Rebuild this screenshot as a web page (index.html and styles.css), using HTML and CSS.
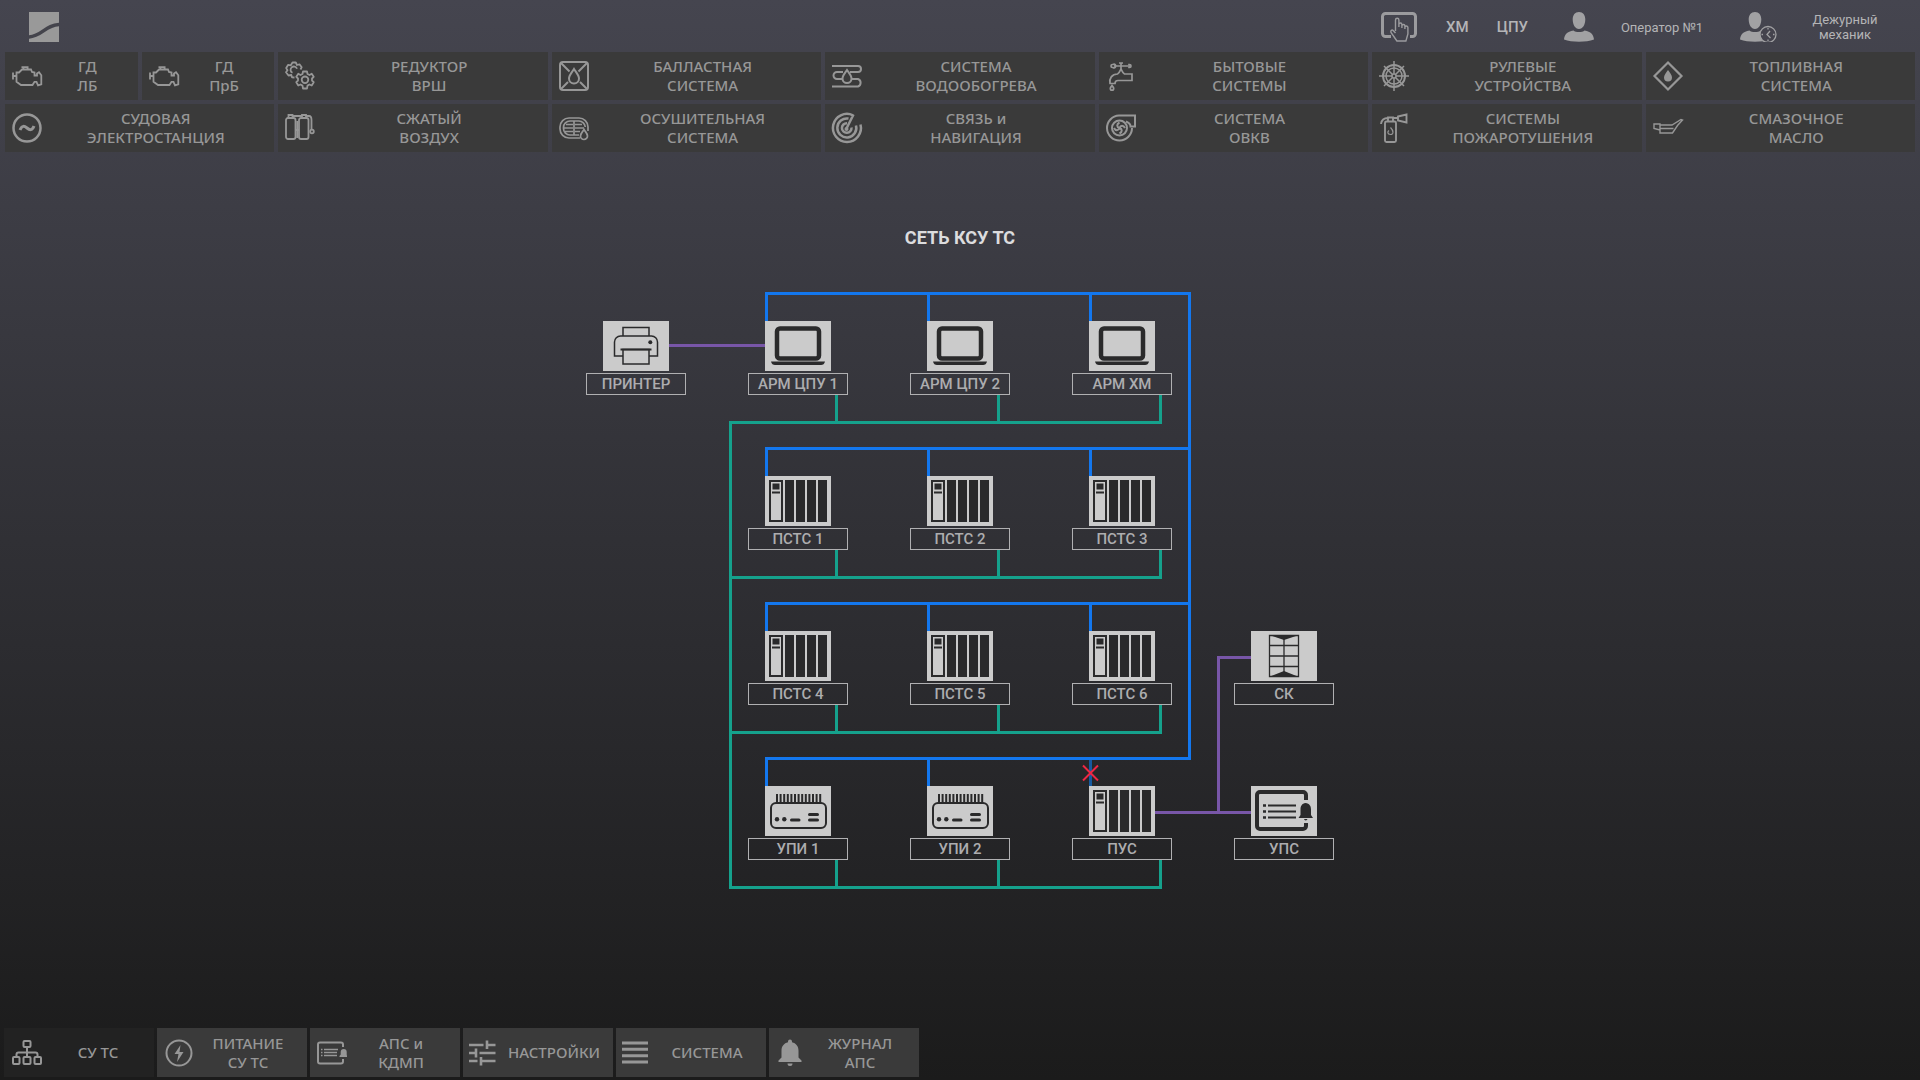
FILE: index.html
```html
<!DOCTYPE html>
<html lang="ru">
<head>
<meta charset="utf-8">
<title>СЕТЬ КСУ ТС</title>
<link rel="stylesheet" href="styles.css">
</head>
<body>
<svg class="sprite" aria-hidden="true">
  <symbol id="engine" viewBox="0 0 30 30"><g fill="none" stroke="currentColor" stroke-width="1.8"><path d="M4.500 11.500H7L10 8.500h9l1 2.500 2.500.5v3h2.500v-2l2-1.200 2.300 3v9l-3.300 1-1.500-3.500h-2L20.500 24H9l-4.500-3.200z"/><path d="M1 11.500v7M1.500 15h3M11 8l1-2M16 8l-1-2M9.500 6.200h7"/></g></symbol>
  <symbol id="gears" viewBox="0 0 30 30"><g fill="none" stroke="currentColor" stroke-width="1.800" stroke-linejoin="round"><path d="M18 10.500h4l.5 2.500 2 1 2.200-1.200 2 3-1.700 1.700v2l1.700 1.700-2 3.300-2.300-1-1.900 1.100-.5 2.900h-4l-.5-2.900-2-1.100-2.200 1-2-3.300 1.700-1.700v-2l-1.700-1.700 2-3 2.200 1.200 2-1z"/><circle cx="20" cy="18.800" r="3.300"/><path d="M9.500 16.500l-2.500-.200L6.300 14l-2.800.5L1 11.300l1.500-2L1.200 7l2-3.200 2.600.5L7.500 1.500h3.300L12 4l2.500-.7 2.200 2.900-1.200 2.300"/><path d="M7.500 11.800A3.300 3.300 0 1 1 12 7.800"/></g></symbol>
  <symbol id="ballast" viewBox="0 0 30 30"><g fill="none" stroke="currentColor" stroke-width="2"><rect x="1" y="1" width="28" height="28" rx="3"/><path d="M2 2l8.500 8.500M28 2l-8.500 8.500M2 28l7-7M28 28l-7-7"/><path d="M15 8c2.500 4 5 6.500 5 9.500a5 5 0 0 1-10 0C10 14.500 12.500 12 15 8z"/></g></symbol>
  <symbol id="heating" viewBox="0 0 30 30"><g fill="none" stroke="currentColor" stroke-width="2"><path d="M0 5h26a3 3 0 0 1 0 6h-8M11 11H5a3.500 3.500 0 0 0 0 7h5M20 18h6a4 4 0 0 1 0 7.500H0"/><path d="M15 9c2.500 3.500 4.500 5.500 4.500 8.500a4.500 4.500 0 0 1-9 0C10.500 14.500 12.500 12.500 15 9z"/></g></symbol>
  <symbol id="tap" viewBox="0 0 30 30"><g fill="none" stroke="currentColor" stroke-width="1.700"><path d="M7 3.500a1.800 1.800 0 1 1 0 3h-.500a1.500 1.500 0 0 1 0-3zM23 3.500h.5a1.500 1.500 0 0 1 0 3H23zM8 5h14M13 2h4M15 2v8M11.500 13c2-1 2.500-3 3.500-5 1 2 1.500 4 3.500 5H26v6.500H12c-2 0-3 .5-3 3H4c-1-5 2-9.500 7.500-9.500z"/><path d="M6 24.500c1 1.500 1.700 2 1.700 3a1.700 1.700 0 0 1-3.400 0c0-1 .7-1.500 1.700-3z"/></g></symbol>
  <symbol id="wheel" viewBox="0 0 30 30"><g fill="none" stroke="currentColor" stroke-width="1.500"><circle cx="15" cy="15" r="11" stroke-width="2"/><circle cx="15" cy="15" r="8"/><circle cx="15" cy="15" r="2"/><path d="M15 0v13M15 17v13M0 15h13M17 15h13M5 5l8.500 8.500M16.500 16.500L25 25M25 5l-8.500 8.500M13.500 16.500L5 25"/></g></symbol>
  <symbol id="fuel" viewBox="0 0 30 30"><path d="M15 1.500L28.500 15 15 28.500 1.500 15z" fill="none" stroke="currentColor" stroke-width="2.200"/><path d="M15 9c2 3 4 5 4 7.500a4 4 0 0 1-8 0C11 14 13 12 15 9z" fill="currentColor"/></symbol>
  <symbol id="power" viewBox="0 0 30 30"><g fill="none" stroke="currentColor" stroke-width="2.500"><circle cx="15" cy="15" r="13.500"/><path stroke-width="3" d="M8 17c2-5 4.500-4 7-2s5 3 7-2"/></g></symbol>
  <symbol id="air" viewBox="0 0 30 30"><g fill="none" stroke="currentColor" stroke-width="1.800"><rect x="1" y="5" width="9.500" height="21" rx="2"/><rect x="14" y="5" width="9.500" height="21" rx="2"/><path d="M3.500 5V2h4v3M17 5V2h4v3M7.500 3H17M21 3h3c2 0 2.500 2 2.500 4v10M10.500 17H14M12.200 8v17"/><circle cx="27" cy="18.500" r="1.800"/></g></symbol>
  <symbol id="bilge" viewBox="0 0 30 30"><g fill="none" stroke="currentColor" stroke-width="1.700"><path d="M21 25H10A9 9 0 0 1 1 16v-2a9 9 0 0 1 9-9h10a9 9 0 0 1 9 9v4"/><path d="M20 22H11a6.500 6.500 0 0 1-6.500-6.500v-1A6.500 6.500 0 0 1 11 8h9a6.500 6.500 0 0 1 6.300 6M7 11.500h7M16 11.500h7M5 15h9M16 15h9M6 18.500h8M16 18.500h5M15 8v14"/><path d="M25 16.500c1.500 2.500 3.500 4 3.500 6.500a3.500 3.500 0 0 1-7 0c0-2.500 2-4 3.500-6.500z"/></g></symbol>
  <symbol id="radar" viewBox="0 0 30 30"><g fill="none" stroke="currentColor" stroke-width="2.500"><path d="M28.500 11.500A14 14 0 1 1 21 2.300M24 12.500A9.500 9.500 0 1 1 16.500 5.600M19.500 14.500a4.800 4.800 0 1 1-4.500-4.300M14.500 15.500L21.500 1.500"/></g><circle cx="14.500" cy="16" r="2" fill="currentColor"/></symbol>
  <symbol id="fan" viewBox="0 0 30 30"><g fill="none" stroke="currentColor" stroke-width="2"><path d="M26 15a12.500 12.500 0 1 1-13-12.500H29v11h-4.500c0-2-2-4-4.500-5"/><circle cx="13.500" cy="15" r="7.500"/></g><g fill="none" stroke="currentColor" stroke-width="2"><path d="M13.500 15c-3-1-3-4 0-5.500M13.500 15c1-3 4-3 5.500 0M13.500 15c3 1 3 4 0 5.500M13.500 15c-1 3-4 3-5.500 0"/></g></symbol>
  <symbol id="fire" viewBox="0 0 30 30"><g fill="none" stroke="currentColor" stroke-width="1.900"><rect x="6" y="8.500" width="11" height="20.500" rx="1.500"/><path d="M9 8V4.500h5V8M2 11c.5-4 3-6 7-6M14 5h5M19 3.500l8.500-2v8L19 7.500z"/><path stroke-width="1.200" d="M11.500 14.500c3 3 3.500 7 0 7s-3-3-1.500-4"/></g></symbol>
  <symbol id="oil" viewBox="0 0 30 30"><g fill="none" stroke="currentColor" stroke-width="1.400"><path d="M7 12h12l9-5.500 1.500.5-5 5.500-5 7.500H7zM7 12V11H1v4.500l6 1.500M7 15.500h13.500"/></g></symbol>
  <symbol id="touch" viewBox="0 0 36 30"><path d="M10 24.500H4.500a3 3 0 0 1-3-3V4.500a3 3 0 0 1 3-3h27a3 3 0 0 1 3 3v17a3 3 0 0 1-3 3H29" fill="none" stroke="currentColor" stroke-width="3"/><path d="M14.500 19V8a1.700 1.700 0 0 1 3.400 0v7M17.900 15v-2.500a1.500 1.500 0 0 1 3 0V16v-2a1.500 1.500 0 0 1 3 0v3-1.500a1.500 1.500 0 0 1 3 0V22l-2 7h-9L10 20.500c-.8-2 1-3 2.200-2l2.300 2.500" fill="none" stroke="currentColor" stroke-width="1.400"/></symbol>
  <symbol id="user" viewBox="0 0 30 30"><path d="M15 0c4 0 6.300 3 6.300 7.500 0 5-2.500 9.500-6.300 9.500S8.700 12.500 8.700 7.500C8.700 3 11 0 15 0zM0 27.500c.5-5 3-8 9.500-9 2 2 9 2 11 0 6.500 1 9 4 9.500 9-8 3-22 3-30 0z" fill="currentColor"/></symbol>
  <symbol id="tree" viewBox="0 0 30 30"><g fill="none" stroke="currentColor" stroke-width="2"><rect x="11.500" y="3" width="7" height="6" rx="1"/><rect x="1" y="19" width="6.500" height="7" rx="1"/><rect x="11.500" y="19" width="7" height="7" rx="1"/><rect x="22.500" y="19" width="6.500" height="7" rx="1"/><path d="M15 9v10M4.500 19v-2.500a2 2 0 0 1 2-2h17a2 2 0 0 1 2 2V19"/></g></symbol>
  <symbol id="bolt" viewBox="0 0 30 30"><circle cx="15" cy="15" r="12.500" fill="none" stroke="currentColor" stroke-width="2"/><path d="M16.500 7L10.500 16h4l-1.500 8 6.500-10h-4z" fill="currentColor"/></symbol>
  <symbol id="alarm-list" viewBox="0 0 30 30"><g fill="none" stroke="currentColor"><path stroke-width="2" d="M26 9V6.500a2 2 0 0 0-2-2H3a2 2 0 0 0-2 2v17a2 2 0 0 0 2 2h21a2 2 0 0 0 2-2V21"/><path stroke-width="1.300" d="M4 11.500h1.500M4 14.500h1.500M4 17.500h1.500M7 11.500h14M7 14.500h13M7 17.500h13"/></g><path d="M22.500 18l1.200-1.500V14a3 3 0 0 1 6 0v2.500L30 18v1h-7.500z" fill="currentColor"/></symbol>
  <symbol id="tune" viewBox="0 0 30 30"><path d="M-1 7h14.500M17.500 7h8M17 2.500v8.500M-1 15h7M9.500 15h16M6 10.500v9M-1 23h8.500M11.500 23h14M11 19v8.500" fill="none" stroke="currentColor" stroke-width="2.600"/></symbol>
  <symbol id="lines" viewBox="0 0 30 30"><path d="M-1 5h26M-1 11.300h26M-1 17.700h26M-1 24h26" fill="none" stroke="currentColor" stroke-width="3"/></symbol>
  <symbol id="bell" viewBox="0 0 30 30"><path d="M14 1.500a2 2 0 0 1 2 2v.800c4 1 6.500 4 6.500 8.200v7l3 3V24h-23v-1.500l3-3v-7c0-4.200 2.500-7.200 6.500-8.200v-.8a2 2 0 0 1 2-2zM11.500 25.500h5a2.500 2.500 0 0 1-5 0z" fill="currentColor"/></symbol>

  <symbol id="n-printer" viewBox="0 0 66 50"><g fill="none" stroke="currentColor" stroke-width="1.500"><path d="M20 15V6.500h26V15M20 35h-8.500V21a6 6 0 0 1 6-6h31a6 6 0 0 1 6 6v14H46"/><rect x="20" y="28.500" width="26" height="14.500"/><path d="M17.500 28.500h31" stroke-width="2"/></g><circle cx="47.300" cy="21.300" r="2" fill="currentColor"/></symbol>
  <symbol id="n-laptop" viewBox="0 0 66 50"><rect x="12" y="7.500" width="42" height="30" rx="3" fill="none" stroke="currentColor" stroke-width="4.500"/><path d="M6 40.500h54c-.5 2.500-2 3.500-4 3.500H10c-2 0-3.500-1-4-3.500z" fill="currentColor"/></symbol>
  <symbol id="n-plc" viewBox="0 0 66 50"><path fill="currentColor" fill-rule="evenodd" d="M4 4h14v42H4zM6 6v38h10V6zM20 4h9v42h-9zM31 4h9v42h-9zM42 4h9v42h-9zM53 4h9v42h-9zM7.500 7.500h7v6h-7zM7 15.500h8v2H7z"/></symbol>
  <symbol id="n-gateway" viewBox="0 0 66 50"><rect x="6" y="17" width="55" height="25" rx="5" fill="none" stroke="currentColor" stroke-width="2"/><path d="M11 12.500h46" stroke="currentColor" stroke-width="9" stroke-dasharray="2 1.600" fill="none"/><circle cx="12" cy="33.300" r="2.200" fill="currentColor"/><circle cx="19.300" cy="33.300" r="2.200" fill="currentColor"/><path d="M26.500 34h7.500M44.500 28.500h8M44.500 34h8" stroke="currentColor" stroke-width="3" stroke-linecap="round"/></symbol>
  <symbol id="n-alarm" viewBox="0 0 66 50"><g fill="none" stroke="currentColor"><path stroke-width="4" d="M55 14V9a3 3 0 0 0-3-3H9a3 3 0 0 0-3 3v31a3 3 0 0 0 3 3h43a3 3 0 0 0 3-3v-3"/><path stroke-width="2" d="M17 19.500h28M17 25.500h28M17 31.500h28"/><path stroke-width="2.500" d="M12 19.500h3M12 25.500h3M12 31.500h3"/></g><path d="M54.500 17c4 .5 5.500 3 5.500 6.500V29l2 3H47.500l2-3v-5.500c0-3.500 1.500-6 5-6.500zM53 33h3.500a1.800 1.800 0 0 1-3.500 0z" fill="currentColor"/></symbol>
  <symbol id="n-cabinet" viewBox="0 0 66 50"><path d="M18.500 4.500h29v41h-29zM33 8v34M18.500 14.500h29M18.500 25h29M18.500 35.500h29" fill="none" stroke="currentColor" stroke-width="1.300"/><path d="M18 4h30l-15 5zM18 46h30l-15-6z" fill="currentColor"/></symbol>
</svg>

<header class="topbar">
  <svg class="logo" viewBox="0 0 30 30" aria-hidden="true"><path d="M0 0h30v30H0z" fill="#999"/><path d="M-1 25C13 25 16 12.500 31 12.500" fill="none" stroke="#44444c" stroke-width="3.500"/></svg>
  <svg class="touch"><use href="#touch"/></svg>
  <div class="posts"><span>ХМ</span><span>ЦПУ</span></div>
  <div class="person"><svg class="icon"><use href="#user"/></svg><span class="person-name">Оператор №1</span></div>
  <div class="person"><svg class="icon-wide" viewBox="0 0 37 30"><use href="#user" width="30" height="30"/><circle cx="28" cy="22.500" r="8" fill="#44434d" stroke="currentColor" stroke-width="1.300"/><path d="M28 16v1.500M28 27.500V29M21.500 22.500H23M33 22.500h1.500M30 19l-3 3.500 3.500 3.500" fill="none" stroke="currentColor" stroke-width="1.300"/></svg><span class="person-name">Дежурный механик</span></div>
</header>

<nav class="systems" aria-label="Системы">
  <button class="tile half"><svg class="icon"><use href="#engine"/></svg><span>ГД<br>ЛБ</span></button>
  <button class="tile half"><svg class="icon"><use href="#engine"/></svg><span>ГД<br>ПрБ</span></button>
  <button class="tile"><svg class="icon"><use href="#gears"/></svg><span>РЕДУКТОР<br>ВРШ</span></button>
  <button class="tile"><svg class="icon"><use href="#ballast"/></svg><span>БАЛЛАСТНАЯ<br>СИСТЕМА</span></button>
  <button class="tile"><svg class="icon"><use href="#heating"/></svg><span>СИСТЕМА<br>ВОДООБОГРЕВА</span></button>
  <button class="tile"><svg class="icon"><use href="#tap"/></svg><span>БЫТОВЫЕ<br>СИСТЕМЫ</span></button>
  <button class="tile"><svg class="icon"><use href="#wheel"/></svg><span>РУЛЕВЫЕ<br>УСТРОЙСТВА</span></button>
  <button class="tile"><svg class="icon"><use href="#fuel"/></svg><span>ТОПЛИВНАЯ<br>СИСТЕМА</span></button>
  <button class="tile"><svg class="icon"><use href="#power"/></svg><span>СУДОВАЯ<br>ЭЛЕКТРОСТАНЦИЯ</span></button>
  <button class="tile"><svg class="icon"><use href="#air"/></svg><span>СЖАТЫЙ<br>ВОЗДУХ</span></button>
  <button class="tile"><svg class="icon"><use href="#bilge"/></svg><span>ОСУШИТЕЛЬНАЯ<br>СИСТЕМА</span></button>
  <button class="tile"><svg class="icon"><use href="#radar"/></svg><span>СВЯЗЬ и<br>НАВИГАЦИЯ</span></button>
  <button class="tile"><svg class="icon"><use href="#fan"/></svg><span>СИСТЕМА<br>ОВКВ</span></button>
  <button class="tile"><svg class="icon"><use href="#fire"/></svg><span>СИСТЕМЫ<br>ПОЖАРОТУШЕНИЯ</span></button>
  <button class="tile"><svg class="icon"><use href="#oil"/></svg><span>СМАЗОЧНОЕ<br>МАСЛО</span></button>
</nav>

<main class="content">
  <h1 class="title">СЕТЬ КСУ ТС</h1>
  <div class="network">
    <svg class="wires" viewBox="0 0 748 597" aria-hidden="true">
      <g class="wire-green">
        <path d="M573 130.500H144.500v465h430V568M144.500 285.500h430V258M144.500 440.500h430V413M574.500 103v29"/>
        <path d="M250.500 103v27M412.500 103v27M250.500 258v27M412.500 258v27M250.500 413v27M412.500 413v27M250.500 568v27M412.500 568v27"/>
      </g>
      <g class="wire-blue">
        <path d="M180.500 30V1.500h423v465h-423V496M180.500 185v-28.500h423M180.500 340v-28.500h423"/>
        <path d="M342.500 1v29M504.500 1v29M342.500 156v29M504.500 156v29M342.500 311v29M504.500 311v29M342.500 466v29"/>
      </g>
      <g class="wire-violet"><path d="M83 53.500h96M665 365.500h-32.500v155M569 520.500h96"/></g>
      <path class="wire-down" d="M504.500 468v26"/>
      <path class="fault" d="M497 473.500l15 15M512 473.500l-15 15"/>
    </svg>
    <figure class="node c1 r1"><svg><use href="#n-printer"/></svg><figcaption>ПРИНТЕР</figcaption></figure>
    <figure class="node c2 r1"><svg><use href="#n-laptop"/></svg><figcaption>АРМ ЦПУ 1</figcaption></figure>
    <figure class="node c3 r1"><svg><use href="#n-laptop"/></svg><figcaption>АРМ ЦПУ 2</figcaption></figure>
    <figure class="node c4 r1"><svg><use href="#n-laptop"/></svg><figcaption>АРМ ХМ</figcaption></figure>
    <figure class="node c2 r2"><svg><use href="#n-plc"/></svg><figcaption>ПСТС 1</figcaption></figure>
    <figure class="node c3 r2"><svg><use href="#n-plc"/></svg><figcaption>ПСТС 2</figcaption></figure>
    <figure class="node c4 r2"><svg><use href="#n-plc"/></svg><figcaption>ПСТС 3</figcaption></figure>
    <figure class="node c2 r3"><svg><use href="#n-plc"/></svg><figcaption>ПСТС 4</figcaption></figure>
    <figure class="node c3 r3"><svg><use href="#n-plc"/></svg><figcaption>ПСТС 5</figcaption></figure>
    <figure class="node c4 r3"><svg><use href="#n-plc"/></svg><figcaption>ПСТС 6</figcaption></figure>
    <figure class="node c5 r3"><svg><use href="#n-cabinet"/></svg><figcaption>СК</figcaption></figure>
    <figure class="node c2 r4"><svg><use href="#n-gateway"/></svg><figcaption>УПИ 1</figcaption></figure>
    <figure class="node c3 r4"><svg><use href="#n-gateway"/></svg><figcaption>УПИ 2</figcaption></figure>
    <figure class="node c4 r4"><svg><use href="#n-plc"/></svg><figcaption>ПУС</figcaption></figure>
    <figure class="node c5 r4"><svg><use href="#n-alarm"/></svg><figcaption>УПС</figcaption></figure>
  </div>
</main>

<nav class="tabs" aria-label="Разделы">
  <button class="tile tab current"><svg class="icon"><use href="#tree"/></svg><span>СУ ТС</span></button>
  <button class="tile tab"><svg class="icon"><use href="#bolt"/></svg><span>ПИТАНИЕ<br>СУ ТС</span></button>
  <button class="tile tab"><svg class="icon"><use href="#alarm-list"/></svg><span>АПС и<br>КДМП</span></button>
  <button class="tile tab"><svg class="icon"><use href="#tune"/></svg><span>НАСТРОЙКИ</span></button>
  <button class="tile tab"><svg class="icon"><use href="#lines"/></svg><span>СИСТЕМА</span></button>
  <button class="tile tab"><svg class="icon"><use href="#bell"/></svg><span>ЖУРНАЛ<br>АПС</span></button>
</nav>
</body>
</html>
```
FILE: styles.css
```css
* { box-sizing: border-box; }

body {
  margin: 0;
  min-height: 100vh;
  display: flex;
  flex-direction: column;
  background: linear-gradient(#45454f, #1b1b1b);
  color: #b4b4b6;
  font-family: Roboto, "Noto Sans", sans-serif;
  font-size: 15px;
}

.sprite { display: none; }

.icon {
  flex: none;
  width: 30px;
  height: 30px;
  overflow: visible;
}
.icon use, symbol { overflow: visible; }

/* Top bar */
.topbar {
  display: flex;
  align-items: center;
  height: 52px;
  padding: 2px 19px 0 29px;
}
.logo { width: 30px; height: 30px; margin-right: auto; }
.touch { width: 36px; height: 30px; color: #9b9b9e; }
.posts {
  display: flex;
  gap: 28px;
  margin: 0 36px 0 29px;
  font-weight: 500;
}
.person {
  display: flex;
  align-items: center;
  gap: 12px;
  color: #a1a1a3;
}
.person + .person { margin-left: 22px; }
.icon-wide { width: 37px; height: 30px; }
.person-name {
  width: 112px;
  padding: 0 12px;
  color: #b4b4b6;
  font-size: 13px;
  line-height: 15px;
  text-align: center;
}

/* System buttons */
.systems {
  display: grid;
  grid-template-columns: repeat(14, 1fr);
  gap: 4px;
  padding: 0 5px;
}
.tile {
  grid-column: span 2;
  display: flex;
  align-items: center;
  height: 48px;
  padding: 0 5px 0 7px;
  border: 0;
  background: #3a3a3a;
  color: #979797;
  font: 500 15px/19px "Noto Sans", sans-serif;
  text-align: center;
  cursor: pointer;
}
.tile span { flex: 1; }
.half { grid-column: span 1; }

/* Network diagram */
.content {
  flex: 1;
  padding-top: 75px;
}
.title {
  margin: 0 0 44px;
  color: #dcdcde;
  font-size: 18px;
  font-weight: 700;
  line-height: 21px;
  text-align: center;
}
.network {
  position: relative;
  display: grid;
  grid-template-columns: repeat(5, 100px);
  gap: 81px 62px;
  justify-content: center;
  width: 748px;
  margin: 0 auto;
  padding: 29px 0;
}
.wires {
  position: absolute;
  inset: 0;
  width: 748px;
  height: 597px;
  fill: none;
  stroke-width: 3;
}
.wire-green { stroke: #15a18c; }
.wire-blue { stroke: #1377ee; }
.wire-violet { stroke: #7856a8; }
.wire-down { stroke: #17599f; }
.fault { stroke: #f02743; stroke-width: 2; }

.node {
  position: relative;
  display: flex;
  flex-direction: column;
  align-items: center;
  gap: 2px;
  margin: 0;
}
.node svg {
  width: 66px;
  height: 50px;
  background: #cbcbcb;
  color: #2a2a2b;
}
.node figcaption {
  width: 100%;
  height: 22px;
  border: 1px solid #b0b0b2;
  color: #adadaf;
  line-height: 20px;
  font-weight: 500;
  text-align: center;
}
.c1 { grid-column: 1; }
.c2 { grid-column: 2; }
.c3 { grid-column: 3; }
.c4 { grid-column: 4; }
.c5 { grid-column: 5; }
.r1 { grid-row: 1; }
.r2 { grid-row: 2; }
.r3 { grid-row: 3; }
.r4 { grid-row: 4; }

/* Bottom tabs */
.tabs {
  display: flex;
  gap: 3px;
  padding: 0 4px 3px;
}
.tab { width: 150px; height: 49px; }
.current {
  padding: 0 0 0 8px;
  background: #222;
}
```
